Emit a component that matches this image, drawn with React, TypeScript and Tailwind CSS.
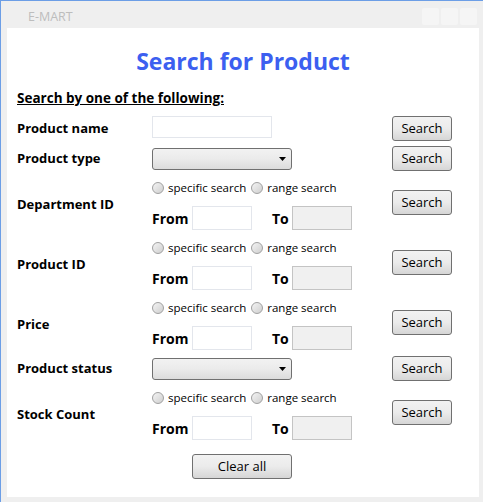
const font = { fontFamily: '"Open Sans", "Noto Sans", sans-serif' };

function SearchButton({ className = '' }: { className?: string }) {
  return (
    <button className={`w-[60px] h-[25px] rounded-[3px] border border-[#707070] bg-gradient-to-b from-[#f2f2f2] via-[#ebebeb] to-[#d6d6d6] text-[13px] text-black leading-none ${className}`}>
      Search
    </button>
  );
}

function Combo() {
  return (
    <div className="w-[140px] h-[22px] rounded-[3px] border border-[#707070] bg-gradient-to-b from-[#f2f2f2] via-[#ebebeb] to-[#dcdcdc] flex items-center justify-end pr-[5px]">
      <svg width="7" height="4" viewBox="0 0 7 4">
        <path d="M0 0H7L3.5 4Z" fill="#000" />
      </svg>
    </div>
  );
}

function Radio({ label }: { label: string }) {
  return (
    <div className="flex items-center gap-[4px]">
      <span className="w-[12px] h-[12px] rounded-full border border-[#a0a0a0] bg-gradient-to-br from-[#f4f4f4] to-[#cfcfcf]" />
      <span className="text-[11.5px] text-black leading-none">{label}</span>
    </div>
  );
}

function RangeRow({ label, className = '' }: { label: string; className?: string }) {
  return (
    <div className={`flex items-center h-[50px] ${className}`}>
      <div className="w-[135px] text-[13px] font-bold text-black">{label}</div>
      <div className="w-[240px] flex flex-col">
        <div className="h-[16px] flex items-center gap-[5px]">
          <Radio label="specific search" />
          <Radio label="range search" />
        </div>
        <div className="mt-[10px] flex items-center h-[24px]">
          <span className="w-[40px] text-[14px] font-bold text-black">From</span>
          <div className="w-[60px] h-[24px] border border-[#e3e6ec] bg-white" />
          <span className="ml-[20px] w-[20px] text-[14px] font-bold text-black">To</span>
          <div className="w-[60px] h-[24px] border border-[#c4c4c4] bg-[#f0f0f0]" />
        </div>
      </div>
      <SearchButton className="self-start mt-[10px]" />
    </div>
  );
}

export default function App() {
  return (
    <div className="w-[483px] h-[502px] bg-[#efefef] border-t border-l border-[#6c9ee6] flex flex-col" style={font}>
      {/* Title bar */}
      <div className="h-[27px] flex items-center pl-[27px] pr-[6px] shrink-0">
        <span className="text-[12.5px] text-[#bdbdbd] flex-1 mt-[5px]">E-MART</span>
        <div className="flex gap-[2px] mt-[4px]">
          <span className="w-[17px] h-[17px] rounded-[2px] bg-[#f5f5f5]" />
          <span className="w-[17px] h-[17px] rounded-[2px] bg-[#f5f5f5]" />
          <span className="w-[17px] h-[17px] rounded-[2px] bg-[#f5f5f5]" />
        </div>
      </div>

      {/* Content */}
      <div className="ml-[6px] w-[472px] h-[469px] bg-white pl-[10px]">
        <h1 className="pt-[18px] h-[54px] text-center pr-[10px] text-[23px] font-bold text-[#3c5ff0] leading-[30px]">
          Search for Product
        </h1>
        <div className="mt-[8px] text-[13.5px] font-bold text-black underline leading-[16px]">
          Search by one of the following:
        </div>

        <div className="mt-[10px] flex items-start h-[25px]">
          <div className="w-[135px] h-[25px] flex items-center text-[13px] font-bold text-black">Product name</div>
          <div className="w-[240px]">
            <div className="w-[120px] h-[22px] border border-[#e3e6ec] bg-white" />
          </div>
          <SearchButton />
        </div>

        <div className="mt-[5px] flex items-center h-[25px]">
          <div className="w-[135px] text-[13px] font-bold text-black">Product type</div>
          <div className="w-[240px]">
            <Combo />
          </div>
          <SearchButton />
        </div>

        <RangeRow label="Department ID" className="mt-[9px]" />
        <RangeRow label="Product ID" className="mt-[10px]" />
        <RangeRow label="Price" className="mt-[10px]" />

        <div className="mt-[6px] flex items-center h-[25px]">
          <div className="w-[135px] text-[13px] font-bold text-black">Product status</div>
          <div className="w-[240px]">
            <Combo />
          </div>
          <SearchButton />
        </div>

        <RangeRow label="Stock Count" className="mt-[9px]" />

        <div className="mt-[13px] pl-[175px]">
          <button className="w-[100px] h-[25px] rounded-[3px] border border-[#707070] bg-gradient-to-b from-[#f2f2f2] via-[#ebebeb] to-[#d6d6d6] text-[13px] text-black leading-none">
            Clear all
          </button>
        </div>
      </div>
    </div>
  );
}
